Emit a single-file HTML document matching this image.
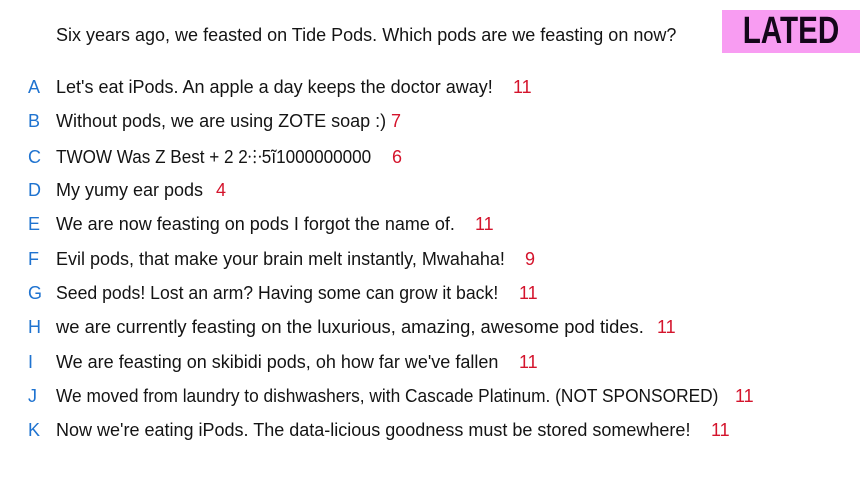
<!DOCTYPE html>
<html><head><meta charset="utf-8"><style>
body{margin:0;width:864px;height:482px;background:#fff;position:relative;overflow:hidden;font-family:"Liberation Sans",sans-serif;font-size:18px;color:#141414}
.t{position:absolute;white-space:nowrap;line-height:20px}
.l{color:#1f73d0;left:28px}
.n{color:#d4142c}
#b{position:absolute;left:722px;top:10px;width:138px;height:43px;background:#f89cf2}
#b span{position:absolute;left:0;right:0;top:0;text-align:center;font-weight:bold;font-size:38px;line-height:43px;color:#14061a;transform:scaleX(0.78)}
</style></head><body>
<div id="b"><span>LATED</span></div>
<div class="t" style="left:56px;top:25px">Six years ago, we feasted on Tide Pods. Which pods are we feasting on now?</div>

<div class="t l" style="top:77px">A</div><div class="t" style="left:56px;top:77px">Let's eat iPods. An apple a day keeps the doctor away!</div><div class="t n" style="left:513px;top:77px">11</div>
<div class="t l" style="top:111px">B</div><div class="t" style="left:56px;top:111px">Without pods, we are using ZOTE soap :)</div><div class="t n" style="left:391px;top:111px">7</div>
<div class="t l" style="top:147px">C</div><div class="t" style="left:56px;top:147px;transform:scaleX(0.95);transform-origin:left">TWOW Was Z Best + 2 2⸭5ĩ1000000000</div><div class="t n" style="left:392px;top:147px">6</div>
<div class="t l" style="top:180px">D</div><div class="t" style="left:56px;top:180px">My yumy ear pods</div><div class="t n" style="left:216px;top:180px">4</div>
<div class="t l" style="top:214px">E</div><div class="t" style="left:56px;top:214px">We are now feasting on pods I forgot the name of.</div><div class="t n" style="left:475px;top:214px">11</div>
<div class="t l" style="top:249px">F</div><div class="t" style="left:56px;top:249px">Evil pods, that make your brain melt instantly, Mwahaha!</div><div class="t n" style="left:525px;top:249px">9</div>
<div class="t l" style="top:283px">G</div><div class="t" style="left:56px;top:283px;transform:scaleX(0.98);transform-origin:left">Seed pods! Lost an arm? Having some can grow it back!</div><div class="t n" style="left:519px;top:283px">11</div>
<div class="t l" style="top:317px">H</div><div class="t" style="left:56px;top:317px;transform:scaleX(1.02);transform-origin:left">we are currently feasting on the luxurious, amazing, awesome pod tides.</div><div class="t n" style="left:657px;top:317px">11</div>
<div class="t l" style="top:352px">I</div><div class="t" style="left:56px;top:352px">We are feasting on skibidi pods, oh how far we've fallen</div><div class="t n" style="left:519px;top:352px">11</div>
<div class="t l" style="top:386px">J</div><div class="t" style="left:56px;top:386px;transform:scaleX(0.962);transform-origin:left">We moved from laundry to dishwashers, with Cascade Platinum. (NOT SPONSORED)</div><div class="t n" style="left:735px;top:386px">11</div>
<div class="t l" style="top:420px">K</div><div class="t" style="left:56px;top:420px">Now we're eating iPods. The data-licious goodness must be stored somewhere!</div><div class="t n" style="left:711px;top:420px">11</div>
</body></html>
